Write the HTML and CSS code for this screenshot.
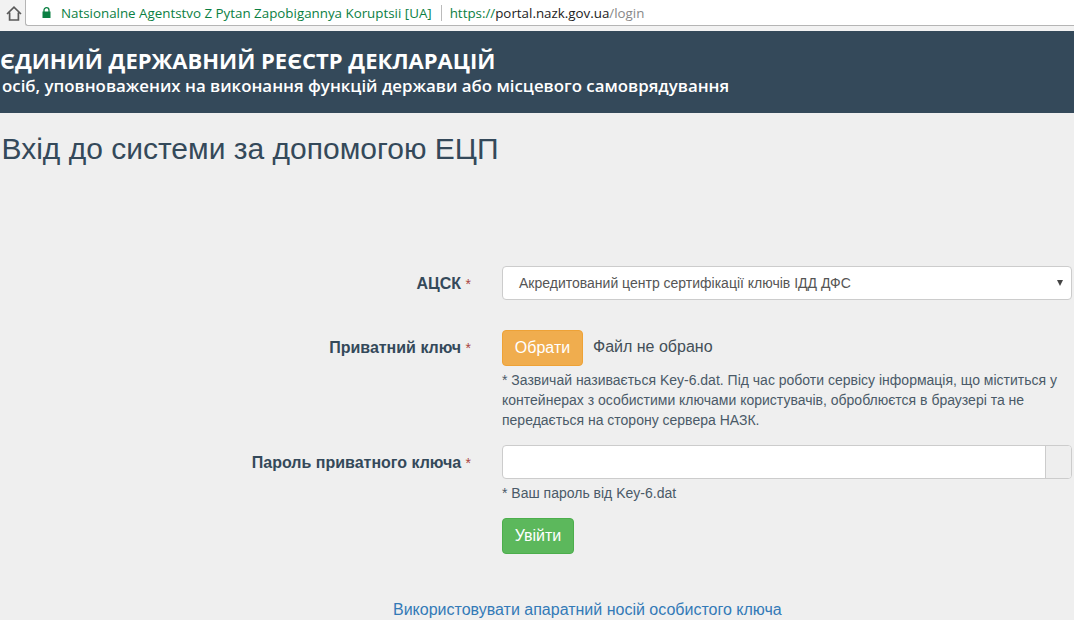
FILE: index.html
```html
<!DOCTYPE html>
<html lang="uk">
<head>
    <meta charset="UTF-8">
    <meta name="viewport" content="width=device-width, initial-scale=1.0">
    <title>Вхід до системи</title>
    <link rel="stylesheet" href="styles.css">
</head>
<body>
    <div class="browser-bar">
        <svg class="home-icon" width="16" height="15" viewBox="0 0 16 15">
            <path d="M1 8 L8 1.2 L15 8 M3.6 6.6 V14 H12.4 V6.6" fill="none" stroke="#5a5a5a" stroke-width="1.7"/>
        </svg>
        <div class="omnibox">
            <svg class="lock-icon" width="9" height="11" viewBox="0 0 9 11">
                <path d="M2 5 V3.2 a2.5 2.5 0 0 1 5 0 V5" fill="none" stroke="#0b8043" stroke-width="1.3"/>
                <rect x="0.5" y="4.5" width="8" height="6.5" fill="#0b8043"/>
            </svg>
            <span class="site-name">Natsionalne Agentstvo Z Pytan Zapobigannya Koruptsii [UA]</span>
            <span class="divider"></span>
            <span class="url"><span class="url-https">https://</span><span class="url-host">portal.nazk.gov.ua</span><span class="url-path">/login</span></span>
        </div>
    </div>

    <header class="site-header">
        <div class="site-title">ЄДИНИЙ ДЕРЖАВНИЙ РЕЄСТР ДЕКЛАРАЦІЙ</div>
        <div class="site-subtitle">осіб, уповноважених на виконання функцій держави або місцевого самоврядування</div>
    </header>

    <main class="content">
        <h1>Вхід до системи за допомогою ЕЦП</h1>

        <form class="login-form">
            <div class="form-row row-ca">
                <label class="form-label">АЦСК <span class="req">*</span></label>
                <div class="select-box">
                    <span>Акредитований центр сертифікації ключів ІДД ДФС</span>
                    <span class="select-arrow"></span>
                </div>
            </div>

            <div class="form-row row-key">
                <label class="form-label">Приватний ключ <span class="req">*</span></label>
                <div>
                    <div class="file-line">
                        <button type="button" class="btn btn-orange">Обрати</button>
                        <span class="file-name">Файл не обрано</span>
                    </div>
                    <p class="hint hint-key">* Зазвичай називається Key-6.dat. Під час роботи сервісу інформація, що міститься у контейнерах з особистими ключами користувачів, оброблюєтся в браузері та не передається на сторону сервера НАЗК.</p>
                </div>
            </div>

            <div class="form-row row-pass">
                <label class="form-label">Пароль приватного ключа <span class="req">*</span></label>
                <div>
                    <div class="input-group">
                        <input type="password" class="pass-input">
                        <span class="input-addon"></span>
                    </div>
                    <p class="hint hint-pass">* Ваш пароль від Key-6.dat</p>
                    <button type="button" class="btn btn-green">Увійти</button>
                </div>
            </div>
        </form>

        <div class="hardware-link"><a href="#">Використовувати апаратний носій особистого ключа</a></div>
    </main>
</body>
</html>
```

FILE: styles.css
```css
html, body {
    height: 620px;
    overflow: hidden;
}

body {
    margin: 0;
    background: #efefef;
    font-family: "Liberation Sans", Arial, sans-serif;
    font-size: 14px;
    color: #34495a;
}

/* browser chrome */
.browser-bar {
    display: flex;
    height: 31px;
    background: #f2f2f2;
    box-sizing: border-box;
}

.home-icon {
    margin: 6px 0 0 6px;
}

.omnibox {
    flex: 1;
    display: flex;
    align-items: center;
    height: 25px;
    margin-left: 3px;
    padding-left: 8px;
    background: #fff;
    border-left: 1px solid #b5b5b5;
    border-bottom: 1px solid #b5b5b5;
    border-bottom-left-radius: 3px;
    font-family: "Open Sans", sans-serif;
    font-size: 13.35px;
}

.lock-icon {
    margin: 0 10px 0 8px;
}

.site-name {
    color: #0b8043;
}

.divider {
    width: 1px;
    height: 16px;
    margin: 0 8px 0 9px;
    background: #bbb;
}

.url-https {
    color: #0b8043;
}

.url-host {
    color: #222;
}

.url-path {
    color: #888;
}

/* header */
.site-header {
    height: 82px;
    box-sizing: border-box;
    padding-top: 14px;
    background: #34495a;
    color: #fff;
    font-family: "Open Sans", sans-serif;
}

.site-title {
    font-size: 22px;
    font-weight: 700;
    line-height: 31px;
}

.site-subtitle {
    margin-left: 2px;
    font-size: 16.85px;
    line-height: 20px;
    font-weight: 600;
}

/* content */
.content {
    padding-top: 19px;
}

h1 {
    margin: 0 0 0 1.5px;
    font-size: 30px;
    font-weight: 400;
    line-height: 33px;
}

.login-form {
    margin-top: 101px;
}

.form-row {
    display: grid;
    grid-template-columns: 471px 570px;
    column-gap: 31px;
}

.form-label {
    padding-top: 8px;
    text-align: right;
    font-size: 16px;
    font-weight: 700;
    line-height: 20px;
}

.req {
    color: #a94442;
    font-size: 14px;
    font-weight: 400;
}

.select-box {
    display: flex;
    justify-content: space-between;
    align-items: center;
    height: 34px;
    box-sizing: border-box;
    padding: 0 8px 0 16px;
    background: #fff;
    border: 1px solid #ccc;
    border-radius: 4px;
    font-size: 14px;
    color: #555;
}

.select-arrow {
    width: 0;
    height: 0;
    border-left: 3px solid transparent;
    border-right: 3px solid transparent;
    border-top: 6px solid #444;
}

.row-key {
    margin-top: 30px;
}

.file-line {
    display: flex;
    align-items: center;
}

.btn {
    height: 36px;
    box-sizing: border-box;
    border-radius: 4px;
    color: #fff;
    font-family: inherit;
    font-size: 16px;
    padding: 0;
}

.btn-orange {
    width: 81px;
    background: #f0ad4e;
    border: 1px solid #eea236;
}

.btn-green {
    display: block;
    width: 72px;
    margin-top: 15px;
    background: #5cb85c;
    border: 1px solid #4cae4c;
}

.file-name {
    margin: -3px 0 0 10px;
    font-size: 16px;
    color: #444f58;
}

.hint {
    margin: 0;
    font-size: 14px;
    line-height: 20px;
    color: #4a5a68;
}

.hint-key {
    margin-top: 4px;
}

.row-pass {
    margin-top: 15px;
}

.input-group {
    display: flex;
    height: 34px;
    box-sizing: border-box;
    background: #fff;
    border: 1px solid #ccc;
    border-radius: 4px;
}

.pass-input {
    flex: 1;
    min-width: 0;
    border: none;
    padding: 0;
    background: transparent;
    border-radius: 4px 0 0 4px;
}

.input-addon {
    width: 25px;
    background: #eee;
    border-left: 1px solid #ccc;
    border-radius: 0 3px 3px 0;
}

.hint-pass {
    margin-top: 4px;
}

.hardware-link {
    margin-top: 46px;
    padding-left: 393px;
    font-size: 16px;
    line-height: 20px;
}

.hardware-link a {
    color: #337ab7;
    text-decoration: none;
}
```
